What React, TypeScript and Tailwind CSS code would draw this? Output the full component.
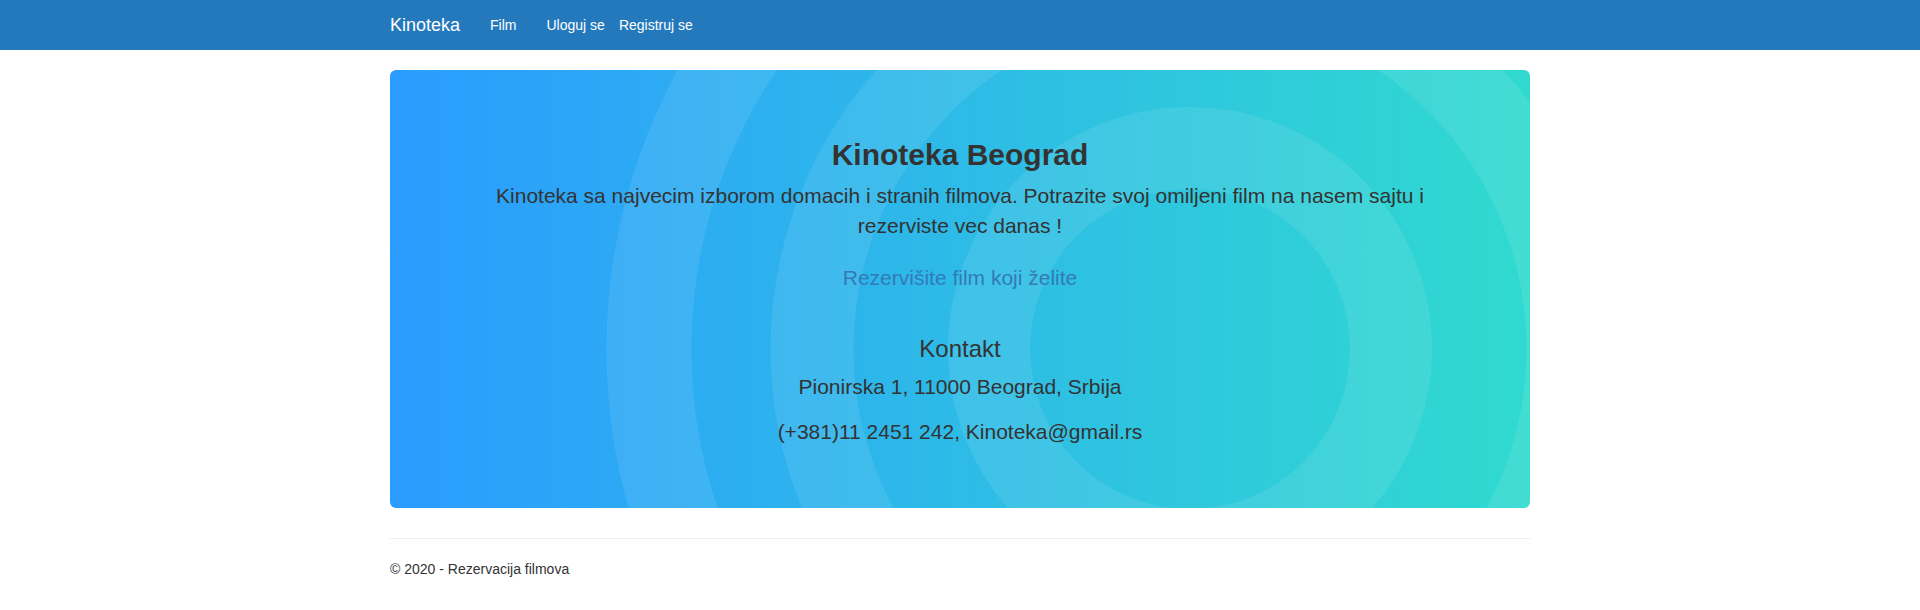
import React from "react";

const links = ["Film"];
const accountLinks = ["Uloguj se", "Registruj se"];

const Rings: React.FC = () => (
  <svg
    className="absolute inset-0 h-full w-full pointer-events-none"
    viewBox="0 0 1140 438"
    preserveAspectRatio="none"
  >
    <g fill="none" stroke="#ffffff" strokeOpacity="0.09">
      <circle cx="800" cy="279" r="201" strokeWidth="82" />
      <circle cx="800" cy="279" r="378" strokeWidth="83" />
      <circle cx="800" cy="279" r="541" strokeWidth="85" />
    </g>
  </svg>
);

export default function App() {
  return (
    <div className="min-h-[610px] bg-white font-['Liberation_Sans',Arial,sans-serif] text-[14px] leading-[20px] text-[#333]">
      <nav className="h-[50px] bg-[#2479bd]">
        <div className="mx-auto flex h-full w-[1140px] items-center text-white">
          <a className="text-[18px] leading-[20px]" href="#">
            Kinoteka
          </a>
          {links.map((l) => (
            <a key={l} className="ml-[30px]" href="#">
              {l}
            </a>
          ))}
          <a className="ml-[30px]" href="#">
            {accountLinks[0]}
          </a>
          <a className="ml-[14px]" href="#">
            {accountLinks[1]}
          </a>
        </div>
      </nav>

      <main className="mx-auto mt-[20px] flex w-[1140px] flex-col">
        <section className="relative overflow-hidden rounded-[6px] bg-[linear-gradient(to_right,#2b9cff,#30dacf)] px-[60px] pt-[48px] pb-[46px] text-center">
          <Rings />
          <div className="relative flex flex-col items-center">
            <h2 className="mt-[20px] text-[30px] font-bold leading-[33px]">
              Kinoteka Beograd
            </h2>
            <p className="mt-[10px] text-[21px] leading-[30px]">
              Kinoteka sa najvecim izborom domacih i stranih filmova. Potrazite
              svoj omiljeni film na nasem sajtu i rezerviste vec danas !
            </p>
            <p className="mt-[22px] text-[21px] leading-[30px]">
              <a className="text-[#337ab7]" href="#">
                Rezervišite film koji želite
              </a>
            </p>
            <h3 className="mt-[43px] text-[24px] leading-[26px]">Kontakt</h3>
            <p className="mt-[10px] text-[21px] leading-[30px]">
              Pionirska 1, 11000 Beograd, Srbija
            </p>
            <p className="mt-[15px] mb-[15px] text-[21px] leading-[30px]">
              (+381)11 2451 242, Kinoteka@gmail.rs
            </p>
          </div>
        </section>

        <footer className="mt-[30px]">
          <hr className="border-t border-[#eee]" />
          <p className="mt-[20px]">© 2020 - Rezervacija filmova</p>
        </footer>
      </main>
    </div>
  );
}
